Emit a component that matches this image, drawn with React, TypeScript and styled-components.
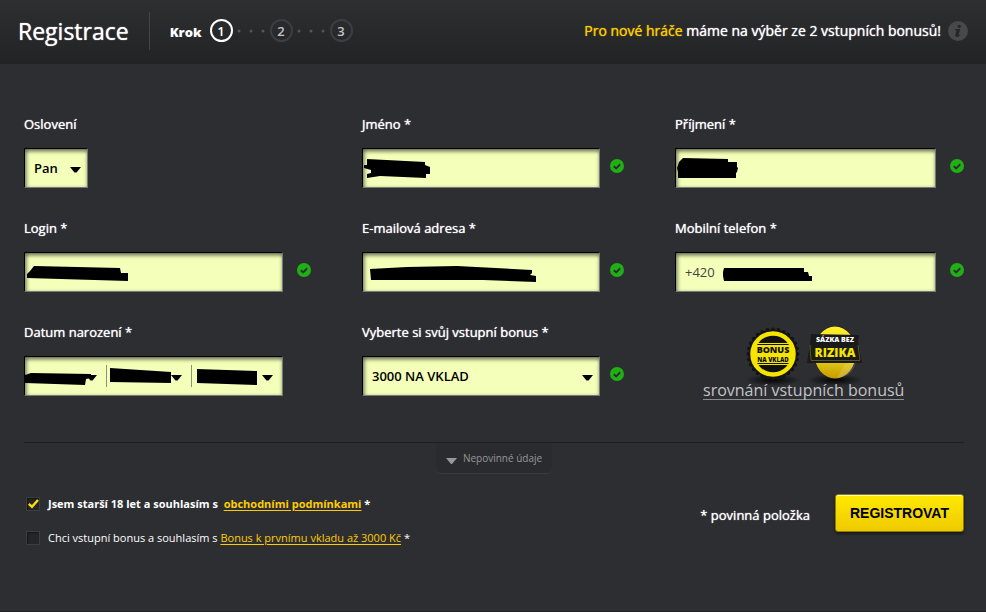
import React, { useState } from "react";
import styled, { createGlobalStyle, css } from "styled-components";

const GlobalStyle = createGlobalStyle`
  *, *::before, *::after { box-sizing: border-box; }
  body {
    margin: 0;
    background: #2d2e32;
    color: #fff;
    font-family: "Open Sans", "Noto Sans", sans-serif;
    font-size: 13px;
    line-height: 20px;
  }
  button, input, select { font: inherit; margin: 0; }
`;

const Page = styled.div`
  min-height: 100vh;
  border-bottom: 1px solid #1f2022;
`;

const crisp = css`
  font-weight: 500;
  text-shadow: 0 0 1px currentColor;
`;

/* Header */

const Header = styled.header`
  display: flex;
  align-items: center;
  height: 64px;
  padding: 0 18px 3px;
  background: linear-gradient(#2e2f31, #222325);
`;

const Title = styled.h1`
  ${crisp}
  margin: 0;
  padding-right: 20px;
  font-size: 23px;
  line-height: 38px;
  border-right: 1px solid #434447;
`;

const StepsLabel = styled.span`
  margin-left: 20px;
  padding-top: 2px;
  font-weight: 800;
`;

const Steps = styled.ol`
  display: flex;
  align-items: center;
  margin: 0 0 0 8px;
  padding: 0;
  list-style: none;
`;

const Step = styled.li<{ $current?: boolean }>`
  display: flex;
  align-items: center;
  justify-content: center;
  width: 23px;
  height: 23px;
  border: 2px solid ${(p) => (p.$current ? "#fff" : "#3d3e41")};
  border-radius: 50%;
  color: ${(p) => (p.$current ? "#fff" : "#c4c5c7")};
  font-size: 13px;
  font-weight: 600;
`;

const StepDots = styled.li`
  display: flex;
  justify-content: center;
  width: 37px;
  svg { display: block; }
`;

const Promo = styled.p`
  ${crisp}
  display: flex;
  align-items: center;
  gap: 7px;
  margin: 0 0 0 auto;
  font-size: 14px;
  svg { display: block; }
`;

const Accent = styled.span`
  color: #fc0;
  text-shadow: 0 0 1px #fc0;
`;

/* Form */

const Form = styled.form`
  padding: 50px 22px 40px 24px;
`;

const FieldGrid = styled.div`
  display: grid;
  grid-template-columns: minmax(0, 287fr) minmax(0, 262fr) minmax(0, 289fr);
  gap: 30px 51px;
`;

const Cell = styled.div`
  display: flex;
  flex-direction: column;
  gap: 14px;
`;

const Label = styled.label`
  ${crisp}
`;

const GroupLabel = styled.span`
  ${crisp}
`;

const FieldRow = styled.div<{ $open?: boolean; $tight?: boolean }>`
  display: flex;
  align-items: center;
  gap: ${(p) => (p.$tight ? "10px" : "14px")};
  padding-right: ${(p) => (p.$open ? "28px" : "0")};
`;

const Box = styled.div<{ $narrow?: boolean }>`
  position: relative;
  display: flex;
  flex: ${(p) => (p.$narrow ? "0 0 64px" : "1 1 0")};
  min-width: 0;
  height: 40px;
  background: #f4ffb9;
  border: 1px solid #77787b;
  border-top-color: #000;
  border-left-color: #000;
  box-shadow: inset 1px 2px 4px rgba(0, 0, 0, 0.65);
`;

const TextInput = styled.input`
  width: 100%;
  padding: 0 9px;
  border: 0;
  background: transparent;
  color: #444;
  outline-offset: -2px;
`;

const SelectSlot = styled.div<{ $divided?: boolean; $grow?: number }>`
  position: relative;
  display: flex;
  flex: ${(p) => p.$grow ?? 1} 1 0;
  min-width: 0;
  margin: ${(p) => (p.$divided ? "8px 0" : "0")};
  border-left: ${(p) => (p.$divided ? "1px solid #8f9474" : "0")};
`;

const Select = styled.select`
  appearance: none;
  width: 100%;
  padding: 0 9px;
  border: 0;
  border-radius: 0;
  background: transparent;
  color: #000;
  font-weight: 600;
`;

const ArrowSvg = styled.svg<{ $inset?: boolean }>`
  position: absolute;
  top: calc(50% - 1px);
  right: ${(p) => (p.$inset ? "9px" : "6px")};
  pointer-events: none;
`;

const MarkerSvg = styled.svg`
  position: absolute;
  top: 0;
  left: 0;
  pointer-events: none;
`;

const OkSvg = styled.svg`
  flex: none;
  margin-bottom: 4px;
`;

const BonusLink = styled.a`
  align-self: flex-start;
  display: flex;
  flex-direction: column;
  align-items: center;
  margin-left: 28px;
  color: #c3c4c6;
  font-size: 16px;
  line-height: 18px;
  white-space: nowrap;
  text-decoration: none;
  svg { display: block; margin-bottom: -7px; }
`;

const BonusCaption = styled.span`
  border-bottom: 1px solid #8b8c8e;
`;

/* Optional section */

const Optional = styled.div`
  display: flex;
  justify-content: center;
  margin-top: 42px;
  border-top: 1px solid #1d1e20;
`;

const OptionalButton = styled.button`
  display: flex;
  align-items: center;
  gap: 6px;
  height: 31px;
  padding: 0 10px;
  border: 0;
  border-bottom: 1px solid #3a3b3e;
  border-radius: 0 0 5px 5px;
  background: #2a2b2e;
  color: #97989b;
  font-size: 10px;
  font-weight: 500;
  svg { margin-top: 5px; }
`;

/* Footer */

const FormFooter = styled.div`
  display: flex;
  justify-content: space-between;
  align-items: flex-start;
  margin-top: 20px;
`;

const Consents = styled.div`
  display: flex;
  flex-direction: column;
  gap: 14px;
  padding-left: 2px;
`;

const Consent = styled.div<{ $strong?: boolean }>`
  display: flex;
  align-items: center;
  gap: 8px;
  font-size: 11px;
  font-weight: ${(p) => (p.$strong ? 700 : 500)};
`;

const CheckHolder = styled.span`
  position: relative;
  display: flex;
  svg {
    position: absolute;
    top: 0;
    left: 0;
    pointer-events: none;
  }
`;

const Checkbox = styled.input`
  appearance: none;
  width: 14px;
  height: 14px;
  border: 1px solid #3c3d41;
  background: #252629;
  box-shadow: inset 1px 1px 2px #151617;
`;

const TermsLink = styled.a`
  color: #fc0;
  text-decoration: underline;
  text-underline-offset: 2px;
`;

const Submit = styled.div`
  display: flex;
  align-items: center;
  gap: 25px;
`;

const RequiredNote = styled.span`
  ${crisp}
  padding-top: 4px;
`;

const SubmitButton = styled.button`
  height: 38px;
  padding: 0 14px;
  border: 1px solid #8f7c00;
  border-radius: 3px;
  background: linear-gradient(#ffea00, #eec900);
  box-shadow: inset 0 1px 0 #fffbd0, 0 2px 3px rgba(0, 0, 0, 0.5);
  color: #000;
  font-family: "Liberation Sans", Arial, sans-serif;
  font-size: 14px;
  font-weight: 700;
`;

const Arrow = ({ inset }: { inset?: boolean }) => (
  <ArrowSvg $inset={inset} width="11" height="6" viewBox="0 0 11 6" aria-hidden="true">
    <path d="M0 0H11L6.500 5.500H4.500Z" fill="#000" />
  </ArrowSvg>
);

const Ok = () => (
  <OkSvg width="14" height="14" viewBox="0 0 14 14" role="img" aria-label="V pořádku">
    <circle cx="7" cy="7" r="7" fill="#1fb014" />
    <path d="M3.800 7.200L6.200 9.400L10.200 5.300" fill="none" stroke="#2d2e32" strokeWidth="2" />
  </OkSvg>
);

const Marker = ({ shapes }: { shapes: string[] }) => (
  <MarkerSvg width="258" height="38" viewBox="0 0 258 38" aria-hidden="true">
    {shapes.map((points) => (
      <polygon key={points} points={points} fill="#000" />
    ))}
  </MarkerSvg>
);

const Dots = () => (
  <StepDots aria-hidden="true">
    <svg width="28" height="4" viewBox="0 0 28 4" fill="#55565a">
      <circle cx="2" cy="2" r="1.500" />
      <circle cx="14" cy="2" r="1.500" />
      <circle cx="26" cy="2" r="1.500" />
    </svg>
  </StepDots>
);

type FieldProps = {
  id: string;
  label: string;
  type?: string;
  value?: string;
  tight?: boolean;
  marker: string[];
};

const Field = ({ id, label, type = "text", value, tight, marker }: FieldProps) => (
  <Cell>
    <Label htmlFor={id}>{label}</Label>
    <FieldRow $tight={tight}>
      <Box>
        <TextInput id={id} type={type} defaultValue={value} />
        <Marker shapes={marker} />
      </Box>
      <Ok />
    </FieldRow>
  </Cell>
);

const badgeFont = '"Open Sans", sans-serif';

const Scallops = () => (
  <>
    {Array.from({ length: 28 }, (_, i) => {
      const a = (i / 28) * Math.PI * 2;
      return <circle key={i} cx={28 + 24.5 * Math.cos(a)} cy={31 + 24.5 * Math.sin(a)} r="2" fill="#141415" />;
    })}
  </>
);

const BonusBadges = () => (
  <svg width="118" height="66" viewBox="0 -1 118 66" aria-hidden="true">
    <defs>
      <radialGradient id="floor">
        <stop offset="0" stopColor="#000" stopOpacity="0.9" />
        <stop offset="1" stopColor="#000" stopOpacity="0" />
      </radialGradient>
      <linearGradient id="gold" x1="0" y1="0" x2="0" y2="1">
        <stop offset="0" stopColor="#fff02a" />
        <stop offset="0.600" stopColor="#e6d21a" />
        <stop offset="1" stopColor="#c79a00" />
      </linearGradient>
    </defs>
    <ellipse cx="28" cy="57" rx="28" ry="6" fill="url(#floor)" />
    <ellipse cx="90" cy="57" rx="28" ry="6" fill="url(#floor)" />
    <Scallops />
    <circle cx="28" cy="31" r="24.500" fill="#141415" />
    <circle cx="28" cy="31" r="20.500" fill="#111" stroke="#f5e400" strokeWidth="4.500" />
    <path d="M11 20H45V21H11ZM8 22H48V40H8ZM11 41H45V42H11Z" fill="#f5e400" />
    <text x="28" y="30" textAnchor="middle" fontFamily={badgeFont} fontSize="9" fontWeight="800" fill="#111">BONUS</text>
    <text x="28" y="39" textAnchor="middle" fontFamily={badgeFont} fontSize="6" fontWeight="800" fill="#111">NA VKLAD</text>
    <ellipse cx="90" cy="29" rx="22" ry="26" fill="#1c1c1c" />
    <ellipse cx="90" cy="29.500" rx="21" ry="26" fill="url(#gold)" />
    <path d="M92 55Q108 54 111 38L100 41Z" fill="#fff" fillOpacity="0.15" />
    <path d="M66 11L114 12L113 18L117 40H62L65 22Z" fill="#1a1a1b" />
    <path d="M66 37L65 22M66 37.500H115M115 37L113 22" fill="none" stroke="#5c561c" />
    <text x="90" y="19" textAnchor="middle" fontFamily={badgeFont} fontSize="7" fontWeight="800" fill="#fff">SÁZKA BEZ</text>
    <text x="90" y="34" textAnchor="middle" fontFamily={badgeFont} fontSize="12" fontWeight="800" fill="#f5e400">RIZIKA</text>
  </svg>
);

const InfoIcon = () => (
  <svg width="20" height="20" viewBox="0 0 20 20" role="img" aria-label="Informace">
    <circle cx="10" cy="10" r="10" fill="#48494b" />
    <circle cx="11.300" cy="5.300" r="1.600" fill="#262729" />
    <path d="M7.300 7.900H12.300L10.500 14Q10.700 14.500 12.200 13.400L12.600 13.900Q10.800 16 8.800 16Q6.700 15.800 7.400 13.600L8.600 9.200H6.900Z" fill="#262729" />
  </svg>
);

type ConsentRowProps = {
  id: string;
  strong?: boolean;
  initial: boolean;
  children: React.ReactNode;
};

const ConsentRow = ({ id, strong, initial, children }: ConsentRowProps) => {
  const [checked, setChecked] = useState(initial);
  return (
    <Consent $strong={strong}>
      <CheckHolder>
        <Checkbox id={id} type="checkbox" checked={checked} onChange={(e) => setChecked(e.target.checked)} />
        {checked && (
          <svg width="14" height="14" viewBox="0 0 14 14" aria-hidden="true">
            <path d="M2.800 6.800L6 9.800L12 3" fill="none" stroke="#fd0" strokeWidth="2.400" />
          </svg>
        )}
      </CheckHolder>
      <label htmlFor={id}>{children}</label>
    </Consent>
  );
};

export default function App() {
  return (
    <>
      <GlobalStyle />
      <Page>
        <Header>
          <Title>Registrace</Title>
          <StepsLabel>Krok</StepsLabel>
          <Steps>
            <Step $current aria-current="step">1</Step>
            <Dots />
            <Step>2</Step>
            <Dots />
            <Step>3</Step>
          </Steps>
          <Promo>
            <span>
              <Accent>Pro nové hráče</Accent> máme na výběr ze 2 vstupních bonusů!
            </span>
            <InfoIcon />
          </Promo>
        </Header>

        <Form onSubmit={(e) => e.preventDefault()}>
          <FieldGrid>
            <Cell>
              <Label htmlFor="salutation">Oslovení</Label>
              <FieldRow>
                <Box $narrow>
                  <SelectSlot>
                    <Select id="salutation" defaultValue="Pan">
                      <option>Pan</option>
                      <option>Paní</option>
                    </Select>
                    <Arrow />
                  </SelectSlot>
                </Box>
              </FieldRow>
            </Cell>
            <Field
              id="firstname"
              label="Jméno *"
              tight
              marker={["4,10 62,13 62,16 67,18 67,25 63,25 63,29 17,27 4,29 4,25 8,24 8,21 1,19 1,16 4,16"]}
            />
            <Field
              id="surname"
              label="Příjmení *"
              marker={["7,9 52,10 52,13 61,13 61,18 62,19 61,23 60,24 60,29 2,29 2,23 1,19 3,13"]}
            />
            <Field id="login" label="Login *" marker={["2,21 5,18 9,13 95,15 96,20 103,20 103,28 2,25"]} />
            <Field
              id="email"
              label="E-mailová adresa *"
              type="email"
              tight
              marker={["7,16 44,14 94,13 169,17 169,20 167,22 173,23 173,29 120,27 8,27"]}
            />
            <Field
              id="phone"
              label="Mobilní telefon *"
              type="tel"
              value="+420"
              marker={["48,15 128,15 128,19 132,19 133,23 136,23 136,28 48,28 47,23 47,19"]}
            />
            <Cell role="group" aria-labelledby="birth-label">
              <GroupLabel id="birth-label">Datum narození *</GroupLabel>
              <FieldRow $open>
                <Box>
                  <SelectSlot $grow={82}>
                    <Select aria-label="Den"><option /></Select>
                    <Arrow inset />
                  </SelectSlot>
                  <SelectSlot $divided $grow={85}>
                    <Select aria-label="Měsíc"><option /></Select>
                    <Arrow inset />
                  </SelectSlot>
                  <SelectSlot $divided $grow={91}>
                    <Select aria-label="Rok"><option /></Select>
                    <Arrow inset />
                  </SelectSlot>
                  <Marker
                    shapes={[
                      "0,18 6,16 66,17 66,21 61,22 60,28 0,26",
                      "85,11 146,15 146,26 85,25",
                      "172,12 232,14 232,28 172,26",
                    ]}
                  />
                </Box>
              </FieldRow>
            </Cell>
            <Cell>
              <Label htmlFor="bonus">Vyberte si svůj vstupní bonus *</Label>
              <FieldRow $tight>
                <Box>
                  <SelectSlot>
                    <Select id="bonus">
                      <option>3000 NA VKLAD</option>
                    </Select>
                    <Arrow />
                  </SelectSlot>
                </Box>
                <Ok />
              </FieldRow>
            </Cell>
            <Cell>
              <BonusLink href="#srovnani">
                <BonusBadges />
                <BonusCaption>srovnání vstupních bonusů</BonusCaption>
              </BonusLink>
            </Cell>
          </FieldGrid>

          <Optional>
            <OptionalButton type="button">
              <svg width="11" height="6" viewBox="0 0 11 6" aria-hidden="true">
                <path d="M0 0H11L6 6H5Z" fill="#97989b" />
              </svg>
              Nepovinné údaje
            </OptionalButton>
          </Optional>

          <FormFooter>
            <Consents>
              <ConsentRow id="terms" strong initial>
                Jsem starší 18 let a souhlasím s{"\u00a0 "}
                <TermsLink href="#podminky">obchodními podmínkami</TermsLink> *
              </ConsentRow>
              <ConsentRow id="bonus-terms" initial={false}>
                Chci vstupní bonus a souhlasím s <TermsLink href="#bonus">Bonus k prvnímu vkladu až 3000 Kč</TermsLink> *
              </ConsentRow>
            </Consents>
            <Submit>
              <RequiredNote>* povinná položka</RequiredNote>
              <SubmitButton type="submit">REGISTROVAT</SubmitButton>
            </Submit>
          </FormFooter>
        </Form>
      </Page>
    </>
  );
}
